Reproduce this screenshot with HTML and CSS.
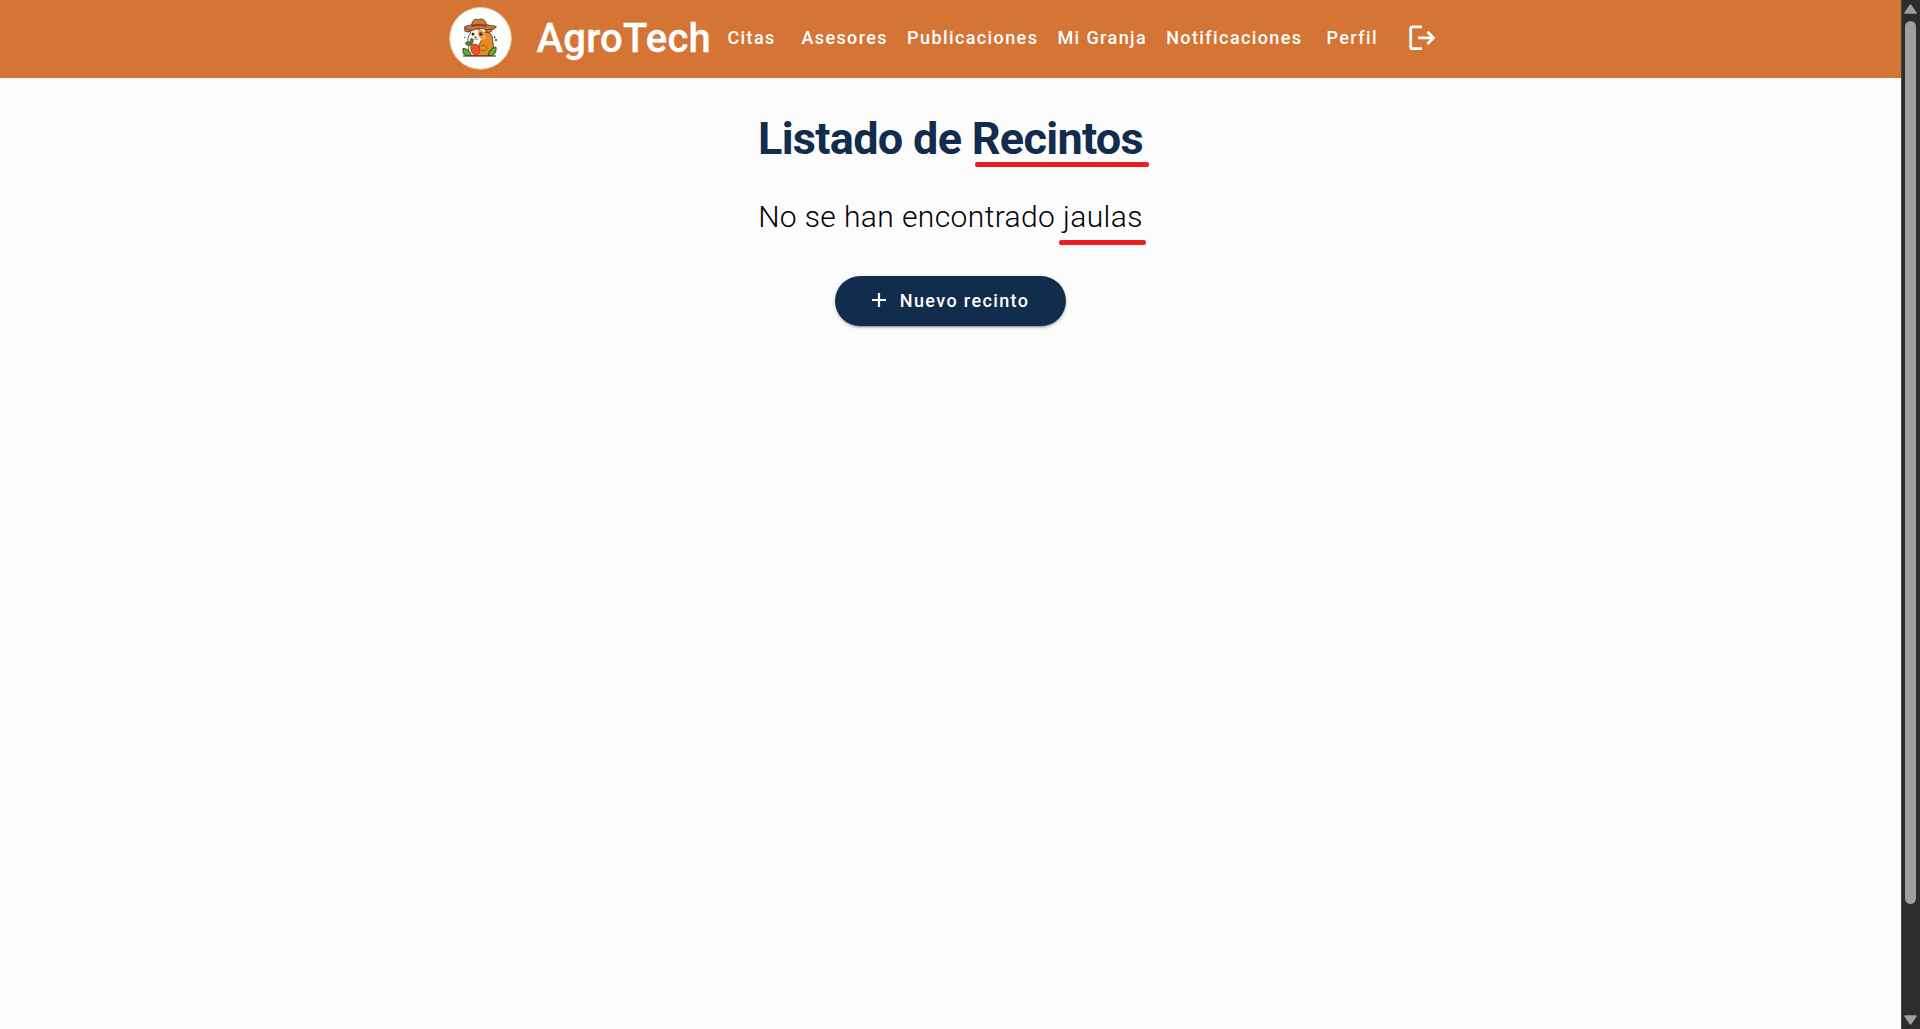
FILE: index.html
```html
<!DOCTYPE html>
<html lang="es">
<head>
<meta charset="utf-8">
<title>AgroTech</title>
<link rel="stylesheet" href="styles.css">
</head>
<body>
<div class="page">
  <header class="toolbar">
    <svg class="logo" viewBox="0 0 189 189" aria-hidden="true">
      <circle cx="94.5" cy="94" r="92.5" fill="#fff" stroke="#efc795" stroke-width="3"/>
      <g stroke="#3a2416" stroke-width="2.2" stroke-linejoin="round">
        <path d="M42 147h99" stroke-width="3"/>
        <path d="M91 87c16-20 41-14 40 15 6 20 0 41-14 44H73c-13-9-9-29-6-40z" fill="#e48a22"/>
        <path d="M64 78c3-16 28-16 36-4 5 9 3 20-4 28l-8 16-9 27H63c-7-10-6-21-2-31-8-9-4-27 3-36z" fill="#fffaf2"/>
        <path d="M87 70c11-3 22 4 24 16 1 10-5 14-11 15-8-7-15-17-13-31z" fill="#f0a342" stroke="none"/>
        <ellipse cx="56" cy="68" rx="10" ry="7" fill="#df8256"/>
        <ellipse cx="119" cy="69" rx="10" ry="7" fill="#df8256"/>
        <path d="M46 60c10-6 19-5 22-7 2-17 13-18 20-15 10-5 22 0 24 14 7 4 20 3 30 7-6 12-21 7-30 9-16-6-30-3-41 2-8-1-20 0-25-10z" fill="#c27c38"/>
        <path d="M68 53c14-3 29-3 43 0l2 7c-16-5-31-5-46 0z" fill="#a9281f" stroke="none"/>
        <path d="M66 115c10-8 25-2 26 10 2 12-6 21-15 20-9-4-15-19-11-30z" fill="#f0541c" stroke-width="1.2"/>
        <path d="M90 119c10-8 24-4 24 6-7 8-16 8-22 3z" fill="#e48a22" stroke-width="1.2"/>
        <path d="M44 141c-3-8-3-12-2-17 9 1 17 5 21 12l4 10H51z" fill="#49a32e"/>
        <path d="M119 146c-2-12 7-23 22-26 2 12-2 23-13 26z" fill="#49a32e"/>
        <path d="M67 113c-10 4-15 2-18-5 5-5 12-4 16 0-3-7-1-12 4-14 5 5 4 13-2 19z" fill="#4b9c2c"/>
      </g>
      <path d="M45 129l17 15m62 0l14-19" stroke="#b2d947" stroke-width="2" fill="none"/>
      <g fill="#2a1b17"><circle cx="72" cy="81" r="4.5"/><circle cx="96" cy="81" r="5.5"/><path d="M75 89h9l-4 5z"/><circle cx="47" cy="91" r="2"/><circle cx="137" cy="91" r="2.5"/><circle cx="141" cy="99" r="3"/></g>
      <path d="M73 96q4 5 7-1q4 6 8 0" fill="none" stroke="#2a1b17" stroke-width="1.5"/>
      <g fill="#fff"><circle cx="73" cy="79" r="1.3"/><circle cx="98" cy="79" r="1.6"/></g>
    </svg>
    <span class="brand">AgroTech</span>
    <nav class="menu">
      <a class="link">Citas</a>
      <a class="link link-asesores">Asesores</a>
      <a class="link link-tight">Publicaciones</a>
      <a class="link link-tight">Mi Granja</a>
      <a class="link link-tight">Notificaciones</a>
      <a class="link link-perfil">Perfil</a>
    </nav>
    <svg class="logout" viewBox="0 0 26 26" fill="none" stroke="#fff" stroke-width="2.8" aria-hidden="true">
      <path d="M13 1.9H3.5Q1.7 1.9 1.7 3.7V21.9Q1.7 23.7 3.5 23.7H13M9 12.8H24M18.4 6.7L24.4 12.8L18.4 18.9"/>
    </svg>
  </header>
  <main class="content">
    <h1 class="title">Listado de <span class="marked">Recintos<i class="mark mark-title"></i></span></h1>
    <p class="empty">No se han encontrado <span class="marked">jaulas<i class="mark mark-empty"></i></span></p>
    <button class="create">
      <svg class="plus" viewBox="0 0 14 14" stroke="#fff" stroke-width="2.2" aria-hidden="true"><path d="M7 0v14M0 7h14"/></svg>
      <span>Nuevo recinto</span>
    </button>
  </main>
</div>
<aside class="scrollbar">
  <svg class="arrow" viewBox="0 0 13 10"><path d="M6.5 1L12 9H1z" fill="#9f9f9f" stroke="#9f9f9f" stroke-linejoin="round" stroke-width="1.5"/></svg>
  <div class="track"><div class="thumb"></div></div>
  <svg class="arrow" viewBox="0 0 13 10"><path d="M6.5 9L12 1H1z" fill="#9f9f9f" stroke="#9f9f9f" stroke-linejoin="round" stroke-width="1.5"/></svg>
</aside>
</body>
</html>
```
FILE: styles.css
```css
* { box-sizing: border-box; }
body {
  margin: 0;
  display: flex;
  height: 1029px;
  overflow: hidden;
  background: #fcfcfc;
  font-family: Roboto, sans-serif;
}
.page { width: 1901px; flex: none; }
.toolbar {
  display: flex;
  align-items: center;
  height: 78px;
  padding: 0 0 2px 449px;
  background: #d47535;
  color: #fff;
  white-space: nowrap;
}
.logo { width: 63px; height: 63px; flex: none; }
.brand {
  width: 172.5px;
  margin: 2px 18.4px 0 24.5px;
  font-size: 40px;
  font-weight: 500;
  letter-spacing: 0.25px;
  line-height: 48px;
  -webkit-text-stroke: 0.3px;
}
.menu { display: flex; }
.link {
  font-size: 18px;
  font-weight: 500;
  letter-spacing: 1.4px;
  line-height: 24px;
}
.link-asesores { margin-left: 25.7px; }
.link-tight { margin-left: 19.1px; }
.link-perfil { margin-left: 24px; }
.logout { width: 26px; height: 26px; margin: 0 0 0 31px; flex: none; }
.content {
  display: flex;
  flex-direction: column;
  align-items: center;
}
.title {
  margin: 33px 0 0;
  font-size: 45px;
  font-weight: 700;
  letter-spacing: -0.7px;
  line-height: 56px;
  color: #122c4d;
}
.empty {
  margin: 30px 0 0;
  font-size: 30px;
  font-weight: 300;
  letter-spacing: 0.39px;
  line-height: 40px;
  color: #000;
}
.marked { position: relative; }
.mark {
  position: absolute;
  height: 5px;
  border-radius: 2px;
  background: #ed1c24;
}
.mark-title { left: 3px; top: 50px; width: 174px; }
.mark-empty { left: -4px; top: 41px; width: 87px; }
.create {
  display: flex;
  align-items: center;
  width: 231px;
  height: 50px;
  margin-top: 39px;
  padding: 0 0 1px 37px;
  border: 0;
  border-radius: 25px;
  background: #122c4d;
  color: #fff;
  font: 500 18px/24px Roboto, sans-serif;
  letter-spacing: 1.38px;
  box-shadow: 0 3px 1px -2px rgba(0,0,0,.2), 0 2px 2px rgba(0,0,0,.14), 0 1px 5px rgba(0,0,0,.12);
}
.plus { width: 14px; height: 14px; margin: 0 13.8px 2px 0; }
.scrollbar {
  display: flex;
  flex-direction: column;
  align-items: center;
  width: 19px;
  padding: 4px 1px 4px 0;
  border-left: 1px solid #444;
  background: #2c2c2c;
}
.arrow { width: 13px; height: 10px; flex: none; }
.track { flex: 1; padding-top: 7px; }
.thumb { width: 11px; height: 883px; border-radius: 5.5px; background: #9f9f9f; }
```
